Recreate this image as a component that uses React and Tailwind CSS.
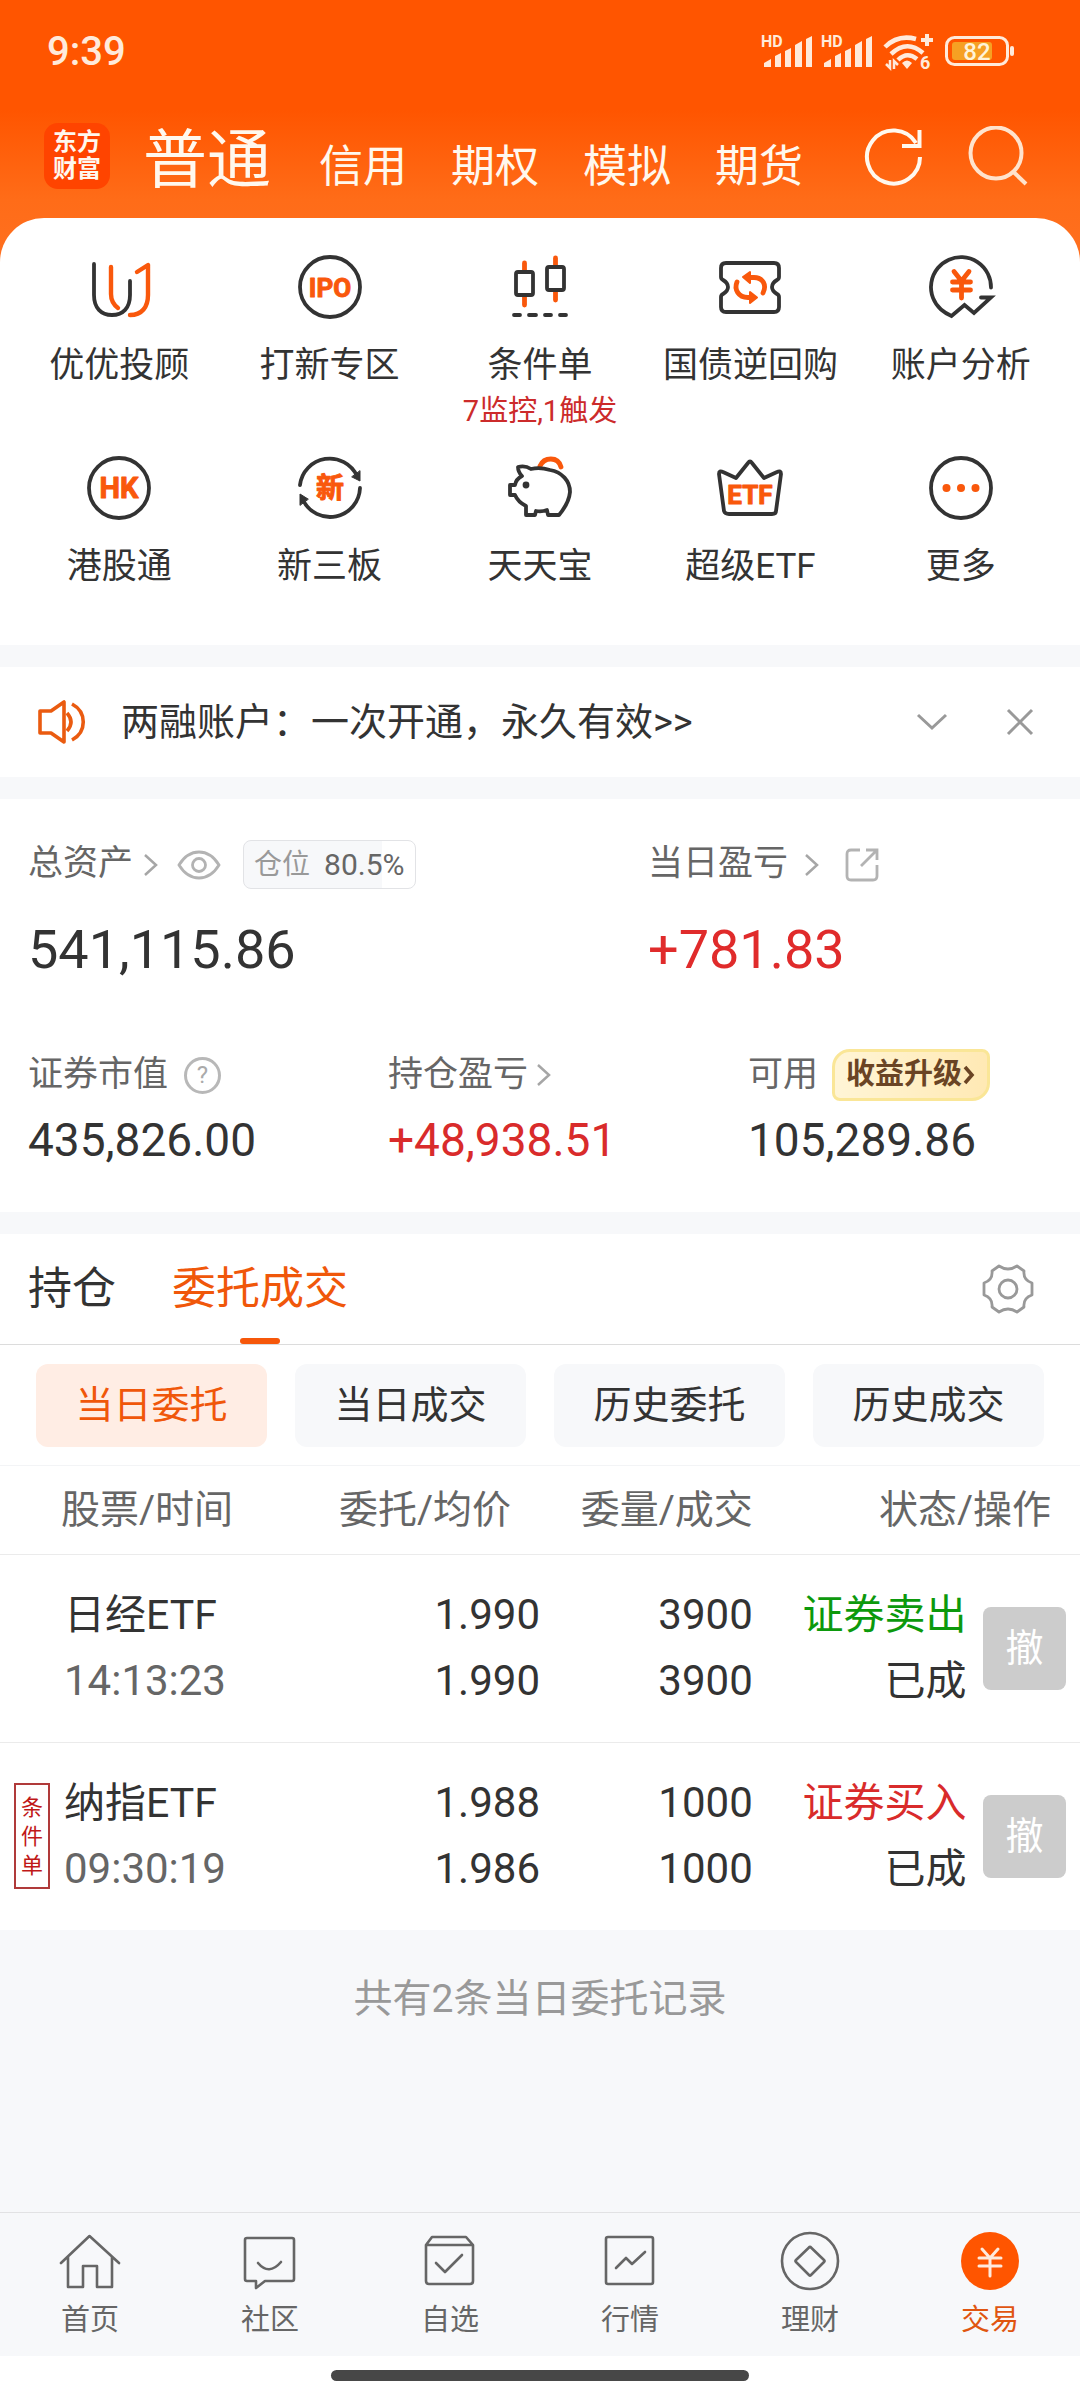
import React from "react";

const DARK = "#333333";
const ORANGE = "#f9580c";

function Glyph({ children }) {
  return (
    <svg width="72" height="72" viewBox="0 0 72 72" fill="none" stroke={DARK} strokeWidth="3.8" strokeLinecap="round" strokeLinejoin="round" aria-hidden="true">
      {children}
    </svg>
  );
}

function GlyphText({ size, y, children }) {
  return (
    <text x="36" y={y} textAnchor="middle" fontSize={size} fontWeight="700" fill={ORANGE} stroke={ORANGE} strokeWidth="1">
      {children}
    </text>
  );
}

const shortcuts = [
  {
    label: "优优投顾",
    icon: (
      <Glyph>
        <path d="M11 13V44C11 57 18 64 29 64S47 57 47 44V30" />
        <g stroke={ORANGE} strokeWidth="4.4">
          <path d="M28 16V43C28 50 31 54 35 57" />
          <path d="M54 21L65 14V44C65 56 59 64 47 64" />
        </g>
      </Glyph>
    ),
  },
  {
    label: "打新专区",
    icon: (
      <Glyph>
        <circle cx="36" cy="36" r="30" />
        <GlyphText size="26" y="46">IPO</GlyphText>
      </Glyph>
    ),
  },
  {
    label: "条件单",
    note: "7监控,1触发",
    icon: (
      <Glyph>
        <path stroke={ORANGE} strokeWidth="4.8" d="M20.500 12V20M20.500 46V54M51.500 7V15M51.500 41V49" />
        <rect x="12" y="21" width="17" height="23" rx="2" />
        <rect x="43" y="16" width="17" height="23" rx="2" />
        <path d="M10 64H16M25 64H32M41 64H47M56 64H62" />
      </Glyph>
    ),
  },
  {
    label: "国债逆回购",
    icon: (
      <Glyph>
        <path d="M12 12H60Q65 12 65 17V26Q65 28 63 29Q58 32 58 36T63 43Q65 44 65 46V56Q65 61 60 61H12Q7 61 7 56V46Q7 44 9 43Q14 40 14 36T9 29Q7 28 7 26V17Q7 12 12 12Z" />
        <g stroke={ORANGE} strokeWidth="4.800">
          <path d="M33 26.500H40C49 26.500 53 34 49 42" />
          <path d="M39 46.500H34C24 46.500 20 38 23 31" />
        </g>
        <path fill={ORANGE} stroke={ORANGE} strokeWidth="2" d="M29 26L36 21V32ZM43 46.500L36 41V52Z" />
      </Glyph>
    ),
  },
  {
    label: "账户分析",
    icon: (
      <Glyph>
        <path strokeLinejoin="miter" d="M66 36.500A30 30 0 1 0 16 58.500Q20 62 26.500 65L39.500 54L49 62L66 46.500H56" />
        <g stroke={ORANGE} strokeWidth="4.800">
          <path d="M29 20.500L36.500 30L44 20.500M36.500 30V47M27.500 31H45.500M27.500 39H45.500" />
        </g>
      </Glyph>
    ),
  },
  {
    label: "港股通",
    icon: (
      <Glyph>
        <circle cx="36" cy="36" r="30" />
        <GlyphText size="29" y="46">HK</GlyphText>
      </Glyph>
    ),
  },
  {
    label: "新三板",
    icon: (
      <Glyph>
        <path d="M6 33A30 30 0 0 1 63 24M66 36A30 30 0 0 1 9 48" />
        <path fill={DARK} strokeWidth="1" d="M66 19V29L58 25ZM6 53V42L14 47Z" />
        <GlyphText size="28" y="46">新</GlyphText>
      </Glyph>
    ),
  },
  {
    label: "天天宝",
    icon: (
      <Glyph>
        <path stroke={ORANGE} strokeWidth="4.8" d="M36 14C40 5 54 4 57 15" />
        <path d="M14 15Q21 13 27 17Q36 15 46 18C58 20 66 29 66 40Q65 51 55 63H44L43 58Q38 60 32 59L31 63H22V54Q14 50 11 43H6V33H11Q12 27 18 24Q14 20 14 15Z" />
        <circle cx="22" cy="33" r="3.400" fill={DARK} stroke="none" />
      </Glyph>
    ),
  },
  {
    label: "超级ETF",
    icon: (
      <Glyph>
        <path d="M34 11Q36 8 38 11L50 26L63 20Q67 18 67 22L62 59Q62 62 58 62H15Q11 62 10 59L5 22Q5 18 9 20L22 26Z" />
        <GlyphText size="26" y="52">ETF</GlyphText>
      </Glyph>
    ),
  },
  {
    label: "更多",
    icon: (
      <Glyph>
        <circle cx="36" cy="36" r="30" />
        <g fill={ORANGE} stroke="none">
          <circle cx="21.500" cy="36" r="4" />
          <circle cx="36" cy="36" r="4" />
          <circle cx="50.500" cy="36" r="4" />
        </g>
      </Glyph>
    ),
  },
];

function Signal({ x }) {
  return (
    <g transform={`translate(${x} 0)`}>
      <text x="0" y="15" fontSize="16" fontWeight="700">HD</text>
      <path d="M3 31L10 27V35H3ZM14 24L20 21V35H14ZM24 19L30 16V35H24ZM34 13L41 9V35H34ZM45 7L51 4V35H45Z" />
    </g>
  );
}

function StatusIcons() {
  return (
    <svg width="256" height="40" viewBox="0 0 256 40" fill="#ffeadb" aria-hidden="true">
      <Signal x={1} />
      <Signal x={61} />
      <g fill="none" stroke="#ffeadb" strokeWidth="4.5">
        <path d="M125 15Q138 2 156 7" />
        <path d="M131 22Q147 7 163 21" />
        <path d="M138 28Q147 19 157 27" />
      </g>
      <path d="M142 31Q147 26 152 31L147 37Z" />
      <path d="M165 2H169V6H173V10H169V14H165V10H161V6H165Z" />
      <text x="160" y="37" fontSize="18" fontWeight="700">6</text>
      <path fill="none" stroke="#ffeadb" strokeWidth="2.500" d="M126 32L130 36V28M134 37V29L138 33" />
      <rect x="186.500" y="5.500" width="61" height="27" rx="8" fill="none" stroke="#ffeadb" strokeWidth="3" />
      <rect x="192" y="10" width="40" height="18" rx="3" fill="#f6a023" />
      <rect x="250" y="14" width="4" height="10" rx="2" />
      <text x="217" y="27.500" fontSize="24" fontWeight="500" textAnchor="middle" fill="#fff3d8">82</text>
    </svg>
  );
}

function ChevronRight() {
  return (
    <svg width="16" height="24" viewBox="0 0 16 24" fill="none" stroke="#a6a6a6" strokeWidth="2.500" aria-hidden="true">
      <path d="M2 2L13 12L2 22" />
    </svg>
  );
}

function NavIcon({ children }) {
  return (
    <svg width="64" height="64" viewBox="0 0 64 64" fill="none" stroke="#666666" strokeWidth="2.600" strokeLinecap="round" strokeLinejoin="round" aria-hidden="true">
      {children}
    </svg>
  );
}

const navItems = [
  {
    label: "首页",
    icon: (
      <NavIcon>
        <path d="M3 33L31.500 6L61 33M10 27V57H25V36H39V57H54V27" />
      </NavIcon>
    ),
  },
  {
    label: "社区",
    icon: (
      <NavIcon>
        <path d="M9 8H54Q56 8 56 10V49Q56 51 54 51H27L18 58V51H9Q7 51 7 49V10Q7 8 9 8Z" />
        <path d="M20 33Q31 46 43 32" />
      </NavIcon>
    ),
  },
  {
    label: "自选",
    icon: (
      <NavIcon>
        <path d="M8 15L14 7H48L55 15V51Q55 54 52 54H11Q8 54 8 51ZM8 15H55" />
        <path d="M18 33L27 42L44 25" />
      </NavIcon>
    ),
  },
  {
    label: "行情",
    icon: (
      <NavIcon>
        <rect x="8" y="7" width="47" height="47" rx="2" />
        <path d="M18 38L28 28L34 34L47 22" />
      </NavIcon>
    ),
  },
  {
    label: "理财",
    icon: (
      <NavIcon>
        <circle cx="32" cy="31" r="28" />
        <path d="M31 17.500Q32 16 33 17.500L46 30Q47 31 46 32L33 45Q32 46 31 45L18 32Q17 31 18 30Z" />
      </NavIcon>
    ),
  },
  {
    label: "交易",
    active: true,
    icon: (
      <NavIcon>
        <circle cx="32" cy="31" r="29" fill="#ff5500" stroke="none" />
        <path stroke="#ffe9dc" strokeWidth="3" d="M24 19L32 28L40 19M32 28V46M21 28H43M21 36H43" />
      </NavIcon>
    ),
  },
];

const orders = [
  { name: "日经ETF", time: "14:13:23", price: "1.990", avg: "1.990", qty: "3900", filled: "3900", side: "证券卖出", sell: true },
  { name: "纳指ETF", time: "09:30:19", price: "1.988", avg: "1.986", qty: "1000", filled: "1000", side: "证券买入", tag: ["条", "件", "单"] },
];

function Header() {
  return (
    <header>
      <div className="flex h-[94px] items-center justify-between pt-2.5 pr-16 pl-[47px]">
        <span className="text-[40px] font-medium text-[#ffeadb]">9:39</span>
        <StatusIcons />
      </div>
      <div className="flex h-[124px] items-center pr-[52px] pl-11 text-[#fff8ee]">
        <div className="flex size-[66px] flex-col items-center justify-center rounded-[14px] bg-[#ff4400] text-2xl leading-[27px] font-bold">
          <span>东方</span>
          <span>财富</span>
        </div>
        <nav className="ml-[33px] flex items-baseline gap-11 pt-4 text-[44px] leading-[72px]">
          <button className="mr-1 text-[64px]">普通</button>
          <button>信用</button>
          <button>期权</button>
          <button>模拟</button>
          <button>期货</button>
        </nav>
        <button className="ml-auto" aria-label="刷新">
          <svg width="60" height="60" viewBox="0 0 60 60" fill="none" stroke="currentColor" strokeWidth="4">
            <path d="M56 31A26.500 26.500 0 1 1 52 17" />
            <path d="M55.500 4V20H38" />
          </svg>
        </button>
        <button className="ml-[44px] text-[#ffe3cd]" aria-label="搜索">
          <svg width="60" height="60" viewBox="0 0 60 60" fill="none" stroke="currentColor" strokeWidth="4">
            <circle cx="28" cy="27" r="25.500" />
            <path d="M44.500 45L58 58" />
          </svg>
        </button>
      </div>
    </header>
  );
}

function Notice() {
  return (
    <section className="flex h-[110px] items-center bg-white pr-11 pl-9">
      <svg width="52" height="46" viewBox="0 0 52 46" fill="none" stroke="#ea5b10" strokeWidth="3.600" strokeLinejoin="round" aria-hidden="true">
        <path d="M15 12L28 3V43L15 34H4V12Z" />
        <path d="M31 14Q39 23 31 32M36 5C51 13 51 33 36 41" />
      </svg>
      <a href="#margin" className="ml-[33px] text-[38px] leading-[48px] text-[#333]">两融账户：一次开通，永久有效&gt;&gt;</a>
      <button className="ml-auto" aria-label="展开">
        <svg width="32" height="32" viewBox="0 0 32 32" fill="none" stroke="#999" strokeWidth="3">
          <path d="M2 9L16 22L30 9" />
        </svg>
      </button>
      <button className="ml-14" aria-label="关闭">
        <svg width="32" height="32" viewBox="0 0 32 32" fill="none" stroke="#999" strokeWidth="3">
          <path d="M4 4L28 28M28 4L4 28" />
        </svg>
      </button>
    </section>
  );
}

function Assets() {
  return (
    <section className="bg-white pt-[41px] pb-11">
      <div className="grid grid-cols-[31fr_23fr] text-[35px] text-[#666]">
        <div className="pl-7">
          <div className="flex h-[49px] items-center">
            <span>总资产</span>
            <span className="ml-2.5"><ChevronRight /></span>
            <button className="ml-[18px]" aria-label="显示或隐藏金额">
              <svg width="44" height="32" viewBox="0 0 44 32" fill="none" stroke="#b3b3b3" strokeWidth="2.800">
                <path d="M2 16Q10 3 22 3T42 16Q34 29 22 29T2 16Z" />
                <circle cx="22" cy="16" r="6.500" />
              </svg>
            </button>
            <span className="ml-[22px] flex h-[49px] items-center gap-3.5 rounded-lg border border-[#e2e3e6] bg-[linear-gradient(90deg,#f7f8fa_80.5%,white_80.5%)] px-2.5 text-[28px] text-[#999]">
              仓位 <span className="text-[30px] text-[#666]">80.5%</span>
            </span>
          </div>
          <div className="mt-[29px] text-[54px] leading-[64px] text-[#333]">541,115.86</div>
        </div>
        <div className="pl-7">
          <div className="flex h-[49px] items-center">
            <span>当日盈亏</span>
            <span className="ml-4"><ChevronRight /></span>
            <button className="ml-6" aria-label="分享">
              <svg width="36" height="36" viewBox="0 0 36 36" fill="none" stroke="#b3b3b3" strokeWidth="2.800">
                <path d="M16 3H7Q3 3 3 7V29Q3 33 7 33H29Q33 33 33 29V18M22 3H33V13M33 3L17 19" />
              </svg>
            </button>
          </div>
          <div className="mt-[29px] text-[54px] leading-[64px] text-[#e02b2b]">+781.83</div>
        </div>
      </div>
      <div className="mt-[67px] grid grid-cols-3 text-[35px] text-[#666]">
        <div className="pl-7">
          <div className="flex h-[52px] items-center">
            <span>证券市值</span>
            <button className="ml-4 flex size-[37px] items-center justify-center rounded-full border-3 border-[#b8b8b8] text-2xl text-[#aaa]" aria-label="说明">?</button>
          </div>
          <div className="mt-[11px] text-[46px] leading-[56px] text-[#333]">435,826.00</div>
        </div>
        <div className="pl-7">
          <div className="flex h-[52px] items-center">
            <span>持仓盈亏</span>
            <span className="ml-2"><ChevronRight /></span>
          </div>
          <div className="mt-[11px] text-[46px] leading-[56px] text-[#d92b2b]">+48,938.51</div>
        </div>
        <div className="pl-7">
          <div className="flex h-[52px] items-center">
            <span>可用</span>
            <button className="ml-3.5 flex h-[52px] items-center rounded-tl-[18px] rounded-tr-lg rounded-br-[18px] rounded-bl-lg border-3 border-[#fae697] bg-linear-to-r from-[#fff5d6] to-[#ffe9b4] px-[11px] text-[29px] font-bold text-[#6a4424]">
              收益升级
              <svg width="14" height="24" viewBox="0 0 14 24" fill="none" stroke="#6a4424" strokeWidth="3.600" aria-hidden="true">
                <path d="M3 4L10 12L3 20" />
              </svg>
            </button>
          </div>
          <div className="mt-[11px] text-[46px] leading-[56px] text-[#333]">105,289.86</div>
        </div>
      </div>
    </section>
  );
}

function Tabs() {
  return (
    <div className="flex h-[111px] items-stretch border-b border-[#dcdcdc] bg-white pr-[46px] pl-7 text-[44px]">
      <button className="mr-14 text-[#333]">持仓</button>
      <button className="relative text-[#f0570a]">
        委托成交
        <span className="absolute bottom-0 left-1/2 h-1.5 w-10 -translate-x-1/2 rounded-full bg-[#f6570a]" />
      </button>
      <button className="ml-auto" aria-label="设置">
        <svg width="52" height="50" viewBox="0 0 52 50" fill="none" stroke="#999" strokeWidth="2.800" strokeLinejoin="round">
          <path d="M17 2Q26 8 35 2L42 7Q41 16 50 19V31Q41 34 42 43L35 48Q26 42 17 48L10 43Q11 34 2 31V19Q11 16 10 7Z" />
          <circle cx="26" cy="25" r="9" />
        </svg>
      </button>
    </div>
  );
}

function Filters() {
  return (
    <div className="grid grid-cols-4 gap-7 border-b border-[#f3f4f6] bg-white px-9 pt-[19px] pb-[18px] text-[38px] text-[#333]">
      <button className="h-[83px] rounded-xl bg-[#ffede4] text-[#f0570a]">当日委托</button>
      <button className="h-[83px] rounded-xl bg-[#f7f8fa]">当日成交</button>
      <button className="h-[83px] rounded-xl bg-[#f7f8fa]">历史委托</button>
      <button className="h-[83px] rounded-xl bg-[#f7f8fa]">历史成交</button>
    </div>
  );
}

function Orders() {
  return (
    <table className="w-full table-fixed border-collapse bg-white text-[42px] leading-[66px] text-[#333]">
      <colgroup>
        <col className="w-[30%]" />
        <col className="w-[20%]" />
        <col className="w-[19.7%]" />
        <col className="w-[19.8%]" />
        <col className="w-[10.5%]" />
      </colgroup>
      <thead>
        <tr className="h-[88px] border-b border-[#ebebeb] text-[39px] text-[#666]">
          <th scope="col" className="pl-[61px] text-left font-normal">股票/时间</th>
          <th scope="col" className="pr-[29px] text-right font-normal">委托/均价</th>
          <th scope="col" className="text-right font-normal">委量/成交</th>
          <th scope="col" colSpan={2} className="pr-[29px] text-right font-normal">状态/操作</th>
        </tr>
      </thead>
      <tbody>
        {orders.map((o) => (
          <tr key={o.name} className="h-[188px] border-b border-[#ebebeb] text-right last:border-b-0">
            <td className="text-left">
              <div className="flex items-center">
                <div className="flex w-16 shrink-0 pl-3.5">
                  {o.tag && (
                    <div className="flex h-[106px] w-9 flex-col items-center justify-center border-2 border-[#b03a3a] text-[22px] leading-[29px] text-[#c01818]">
                      {o.tag.map((c) => (
                        <span key={c}>{c}</span>
                      ))}
                    </div>
                  )}
                </div>
                <div>
                  <div className="text-[41px]">{o.name}</div>
                  <div className="text-[#666]">{o.time}</div>
                </div>
              </div>
            </td>
            <td>
              <div>{o.price}</div>
              <div>{o.avg}</div>
            </td>
            <td>
              <div>{o.qty}</div>
              <div>{o.filled}</div>
            </td>
            <td className="text-[41px]">
              <div className={o.sell ? "text-[#0c990c]" : "text-[#d92b2b]"}>{o.side}</div>
              <div>已成</div>
            </td>
            <td className="pr-3.5">
              <button className="ml-auto flex size-[83px] items-center justify-center rounded-lg bg-[#cccccc] text-[38px] text-white">撤</button>
            </td>
          </tr>
        ))}
      </tbody>
    </table>
  );
}

export default function App() {
  return (
    <div className="flex min-h-screen flex-col bg-[#f7f8fa] font-[Roboto,'Noto_Sans_CJK_SC',sans-serif]">
      <div className="bg-[linear-gradient(#ff5500_110px,#ff6c18_200px,#ff7020_262px)]">
        <Header />
        <section className="grid grid-cols-5 gap-y-[23px] rounded-t-[44px] bg-white px-3.5 pt-[33px] pb-14">
          {shortcuts.map((s) => (
            <button key={s.label} className="flex flex-col items-center text-[35px] leading-[44px] text-[#333]">
              {s.icon}
              <span className="mt-[21px] whitespace-nowrap">{s.label}</span>
              {s.note && <span className="mt-[5px] text-[29px] leading-9 whitespace-nowrap text-[#cc2b2b]">{s.note}</span>}
            </button>
          ))}
        </section>
      </div>
      <main className="mt-[22px] flex flex-col gap-[22px]">
        <Notice />
        <Assets />
        <div>
          <Tabs />
          <Filters />
          <Orders />
        </div>
      </main>
      <p className="mt-11 text-center text-[39px] leading-[50px] text-[#999]">共有2条当日委托记录</p>
      <nav className="mt-auto grid grid-cols-6 border-t border-[#e2e2e4] pt-[17px] pb-4 text-[29px] leading-10 text-[#666]">
        {navItems.map((n) => (
          <a key={n.label} href={"#" + n.label} className="flex flex-col items-center gap-1.5">
            {n.icon}
            <span className={n.active ? "text-[#e05510]" : ""}>{n.label}</span>
          </a>
        ))}
      </nav>
      <div className="flex h-11 justify-center bg-white pt-3.5">
        <div className="h-[11px] w-[418px] rounded-full bg-[#474747]" />
      </div>
    </div>
  );
}
